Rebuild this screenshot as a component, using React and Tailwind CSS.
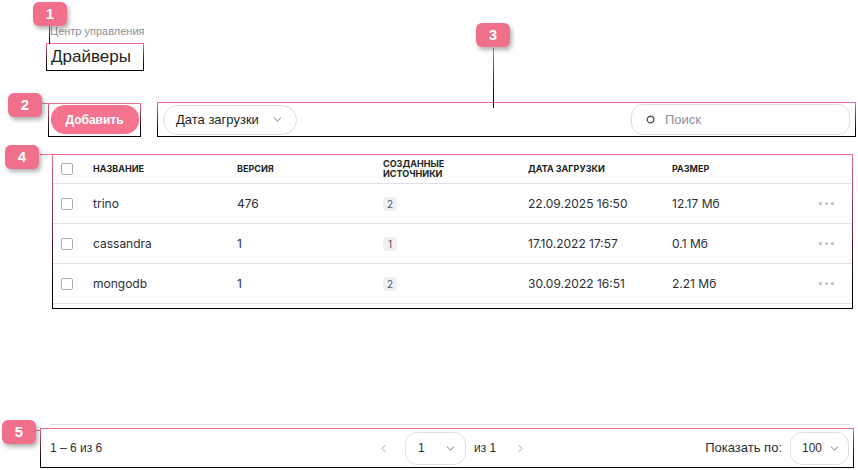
import { ChevronDown, ChevronLeft, ChevronRight } from "lucide-react";

const rows = [
  { name: "trino", version: "476", sources: 2, date: "22.09.2025 16:50", size: "12.17 Мб" },
  { name: "cassandra", version: "1", sources: 1, date: "17.10.2022 17:57", size: "0.1 Мб" },
  { name: "mongodb", version: "1", sources: 2, date: "30.09.2022 16:51", size: "2.21 Мб" },
];

const cols = "grid grid-cols-[32px_144px_146px_145px_144px_1fr_auto] pl-[8px] pr-[18px] items-center";

// пронумерованная метка поверх скриншота
const Badge = ({ n, className }) => (
  <div
    className={
      "absolute w-[34px] h-[24px] rounded-[6px] bg-[#f0708b] text-white font-bold text-[15px] flex items-center justify-center shadow-[2px_3px_4px_rgba(0,0,0,0.3)] " +
      className
    }
  >
    {n}
  </div>
);

// рамка аннотации: сверху розовая, снизу чёрная
const Frame = ({ className, innerClassName, children }) => (
  <div className={"bg-linear-to-b from-[#f0708b] to-black p-px " + className}>
    <div className={"bg-white h-full " + innerClassName}>{children}</div>
  </div>
);

const Checkbox = () => (
  <div className="w-[12px] h-[12px] border border-[#a9adb8] rounded-[2px] bg-white" />
);

export default function App() {
  return (
    <div
      className="relative w-[858px] h-[470px] bg-white overflow-hidden flex flex-col text-[#222]"
      style={{ fontFamily: "'Liberation Sans', Arial, sans-serif" }}
    >
      {/* Заголовок */}
      <div className="pl-[50px] pt-[24px] text-[11px] leading-[14px] text-[#8a8f9c]">Центр управления</div>
      <Frame className="ml-[46px] mt-[5px] w-[98px] h-[28px]" innerClassName="flex items-center pl-[4px]">
        <span className="text-[17px] text-[#1d1f24]">Драйверы</span>
      </Frame>

      {/* Панель действий */}
      <div className="flex items-center mt-[31px] h-[35px]">
        <Frame className="ml-[48px] w-[93px] h-[34px]" innerClassName="flex items-center justify-center">
          <button className="w-[88px] h-[29px] rounded-[14px] bg-[#f5738f] text-white text-[12px] font-bold">
            Добавить
          </button>
        </Frame>
        <Frame className="ml-[16px] w-[699px] h-[35px]" innerClassName="flex items-center justify-between px-[5px]">
          <div className="h-[30px] w-[134px] rounded-full border border-[#dcdfe7] flex items-center pl-[12px] pr-[12px] justify-between">
            <span className="text-[13px] text-[#1d1f24]">Дата загрузки</span>
            <ChevronDown size={13} className="text-[#a4a9b4]" />
          </div>
          <div className="h-[31px] w-[219px] rounded-[12px] border border-[#dcdfe7] flex items-center pl-[14px]">
            <svg width="9" height="9" viewBox="0 0 9 9">
              <circle cx="4.5" cy="4.5" r="3.3" fill="none" stroke="#555a66" strokeWidth="1.4" />
            </svg>
            <span className="ml-[10px] text-[13px] text-[#8a8f9c]">Поиск</span>
          </div>
        </Frame>
      </div>

      {/* Таблица */}
      <Frame className="ml-[52px] mt-[17px] w-[801px] h-[155px]">
        <div style={{ fontFamily: "Inter, 'Liberation Sans', sans-serif" }}>
          <div className={cols + " h-[29px] border-b border-[#dfe1e8] text-[9px] font-bold uppercase leading-[10px] text-[#1d1f24]"}>
            <Checkbox />
            <span>Название</span>
            <span>Версия</span>
            <span>
              Созданные
              <br />
              источники
            </span>
            <span>Дата загрузки</span>
            <span>Размер</span>
            <span />
          </div>
          {rows.map((r) => (
            <div key={r.name} className={cols + " h-[40px] border-b border-[#dfe1e8] text-[12px] text-[#2b2e36]"}>
              <Checkbox />
              <span>{r.name}</span>
              <span>{r.version}</span>
              <span>
                <span className="inline-flex items-center justify-center w-[14px] h-[14px] rounded-[3px] bg-[#eff1f5] text-[10px] text-[#555a66]">
                  {r.sources}
                </span>
              </span>
              <span>{r.date}</span>
              <span>{r.size}</span>
              <div className="flex gap-[3px]">
                <span className="w-[3px] h-[3px] rounded-full bg-[#b9bdc7]" />
                <span className="w-[3px] h-[3px] rounded-full bg-[#b9bdc7]" />
                <span className="w-[3px] h-[3px] rounded-full bg-[#b9bdc7]" />
              </div>
            </div>
          ))}
        </div>
      </Frame>

      {/* Пагинация */}
      <div className="mt-auto ml-[50px] w-[800px] border-t border-[#dfe1e8]" />
      <Frame
        className="ml-[40px] mt-[3px] mb-[2px] w-[814px] h-[40px]"
        innerClassName="flex items-center text-[12px] text-[#2b2e36]"
      >
        <div className="w-[336px] pl-[9px]">1 – 6 из 6</div>
        <div className="flex items-center">
          <ChevronLeft size={13} className="text-[#c9ccd4]" />
          <div className="ml-[15px] h-[33px] w-[61px] rounded-[12px] border border-[#dcdfe7] flex items-center justify-between pl-[12px] pr-[8px]">
            <span>1</span>
            <ChevronDown size={13} className="text-[#a4a9b4]" />
          </div>
          <span className="ml-[8px]">из 1</span>
          <ChevronRight size={13} className="ml-[18px] text-[#c9ccd4]" />
        </div>
        <div className="flex-1 flex items-center justify-end pr-[4px]">
          <span className="text-[13px]">Показать по:</span>
          <div className="ml-[8px] h-[33px] w-[59px] rounded-[12px] border border-[#dcdfe7] flex items-center justify-between pl-[11px] pr-[7px]">
            <span>100</span>
            <ChevronDown size={13} className="text-[#a4a9b4]" />
          </div>
        </div>
      </Frame>

      {/* Аннотации */}
      <div className="absolute left-[49px] top-[25px] w-px h-[19px] bg-linear-to-b from-[#f0708b] to-black" />
      <div className="absolute left-[41px] top-[103px] w-[8px] h-px bg-[#f0708b]" />
      <div className="absolute left-[493px] top-[48px] w-px h-[60px] bg-linear-to-b from-[#f0708b] to-black" />
      <div className="absolute left-[40px] top-[154px] w-[13px] h-px bg-[#f0708b]" />
      <div className="absolute left-[35px] top-[430px] w-[6px] h-px bg-[#f0708b]" />
      <Badge n="1" className="left-[33px] top-[2px]" />
      <Badge n="2" className="left-[8px] top-[93px]" />
      <Badge n="3" className="left-[476px] top-[23px]" />
      <Badge n="4" className="left-[5px] top-[145px]" />
      <Badge n="5" className="left-[2px] top-[420px]" />
    </div>
  );
}
